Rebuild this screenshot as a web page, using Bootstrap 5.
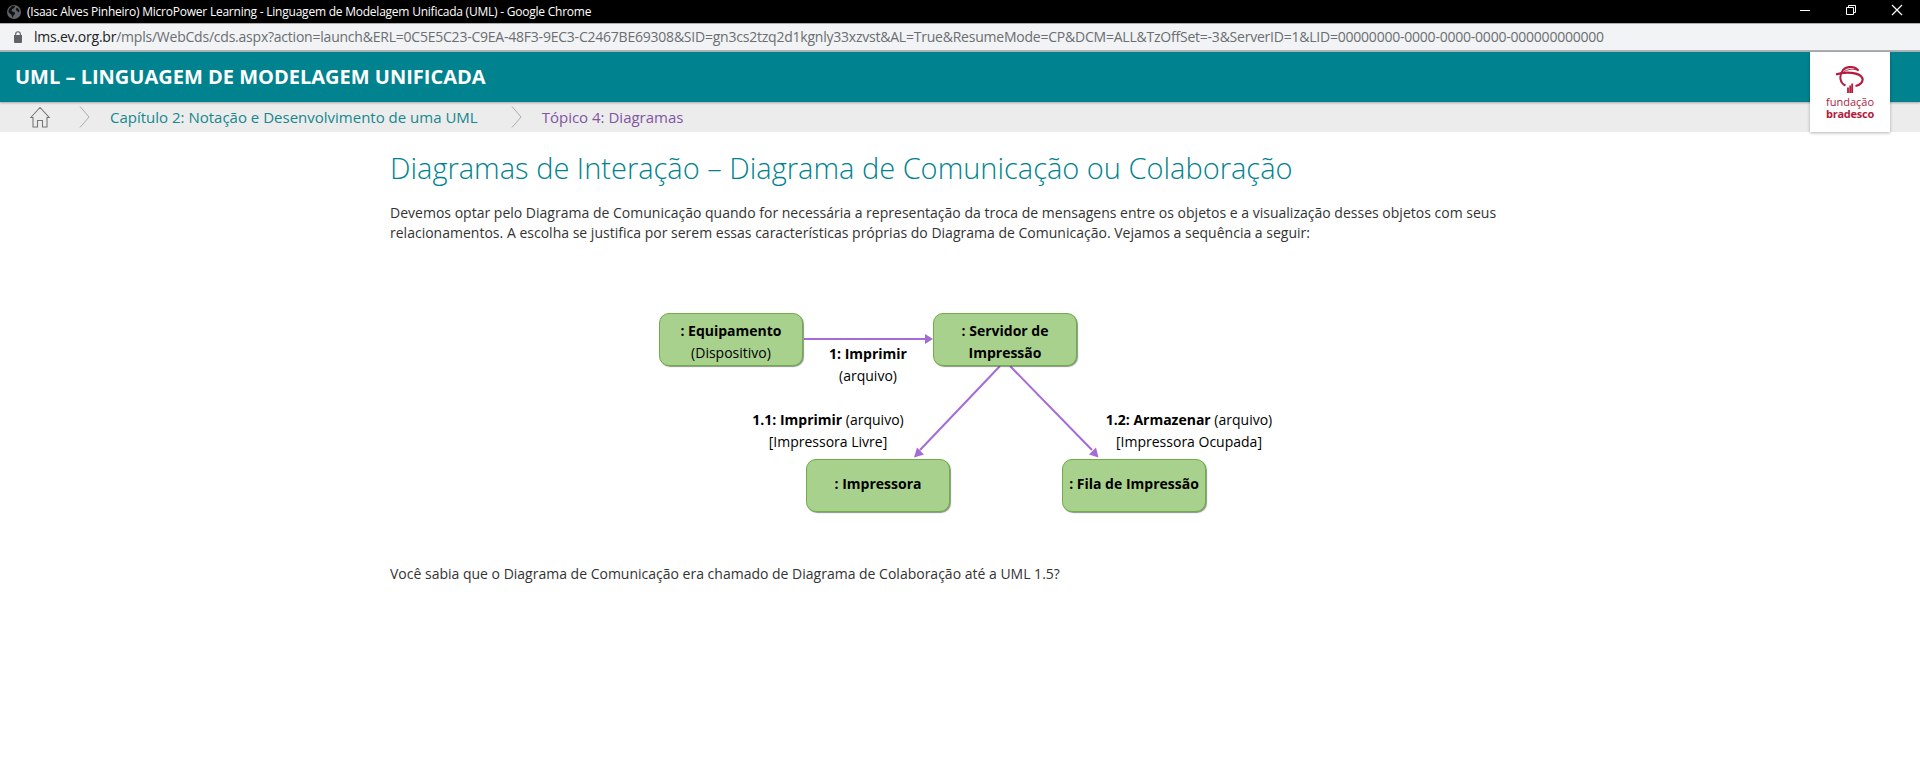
<!DOCTYPE html>
<html lang="pt-BR">
<head>
<meta charset="utf-8">
<meta name="viewport" content="width=device-width, initial-scale=1">
<title>MicroPower Learning - Linguagem de Modelagem Unificada (UML)</title>
<link href="https://cdn.jsdelivr.net/npm/bootstrap@5.3.0/dist/css/bootstrap.min.css" rel="stylesheet">
<style>
  body { font-family: "Open Sans", sans-serif; color: #333; overflow: hidden; }
  b { font-weight: 700; }
  svg { display: block; flex: none; }
  .window-bar { height: 23px; background: #000; font-size: 12px; letter-spacing: -.23px; padding-left: 7px; padding-right: 17px; }
  .window-title { margin-left: 6px; }
  .window-buttons { gap: 34px; padding-bottom: 3px; }
  .address-bar { height: 29px; background: #f1f3f4; border-top: 1px solid #adadad; border-bottom: 2px solid #b0b3b5; padding-left: 14px; font-size: 14px; letter-spacing: -.224px; color: #6b6e72; }
  .address-text { margin-left: 12px; padding-bottom: 2px; white-space: nowrap; }
  .address-text b { font-weight: 400; color: #202124; }
  .course-bar { height: 50px; background: #00838f; padding-left: 15px; position: relative; z-index: 1; box-shadow: 0 1px 2px rgba(0,0,0,.3); }
  .course-title { font-size: 20px; font-weight: 700; color: #fff; }
  .brand-card { position: absolute; top: 0; right: 30px; width: 80px; height: 80px; box-shadow: 0 1px 3px rgba(0,0,0,.3); color: #b31b3c; font-size: 11px; line-height: 12px; padding-top: 14px; }
  .brand-name { margin-top: 2px; }
  .brand-name b { letter-spacing: -.25px; }
  .crumbs { height: 30px; background: #ececec; font-size: 15px; line-height: 30px; padding-left: 30px; }
  .crumb-chapter { color: #13888f; margin-left: 20px; }
  .crumb-topic { color: #8055a3; margin-left: 20px; }
  .crumb-first { margin-left: 29px; }
  .crumb-next { margin-left: 33px; }
  .lesson { width: 1140px; margin-left: 390px; }
  .lesson-title { font-size: 29px; font-weight: 300; line-height: 36px; color: #00838f; margin: 18px 0 17px; }
  .lesson p { font-size: 14px; line-height: 20px; margin: 0; }
  .intro { letter-spacing: .009px; }
  .diagram { position: relative; width: 640px; height: 210px; margin: 65px 0 46px 264px; font-size: 14px; line-height: 22px; color: #000; text-align: center; }
  .object-node { position: absolute; width: 144px; height: 53px; background: #a9d18e; border: 1px solid #70ad47; border-radius: 10px; box-shadow: 1px 1px 1px rgba(60,80,60,.6); padding-top: 6px; font-weight: 700; white-space: nowrap; }
  .object-node span { font-weight: 400; }
  .single-line { padding-top: 13px; }
  .message { position: absolute; transform: translateX(-50%); white-space: nowrap; }
  .arrows { position: absolute; left: 0; top: 0; }
</style>
</head>
<body>
<header>
  <div class="window-bar d-flex align-items-center text-white">
    <svg width="14" height="14" viewBox="0 0 14 14"><circle cx="7" cy="7" r="7" fill="#606468"/><path d="M5 1 8 .7 7.4 3 5.4 4 4.5 6 7.8 7.4 8 9 6.5 10.5 5.7 13 4.5 10 1.3 7 2 4ZM10 2.5 12.4 5 12 7.5 9.7 6 8.8 4Z" fill="#111"/></svg>
    <span class="window-title me-auto">(Isaac Alves Pinheiro) MicroPower Learning - Linguagem de Modelagem Unificada (UML) - Google Chrome</span>
    <div class="window-buttons d-flex">
      <svg width="12" height="12" viewBox="0 0 12 12"><path d="M1 6.500H11" stroke="#fff"/></svg>
      <svg width="12" height="12" viewBox="0 0 12 12" fill="none" stroke="#fff"><path d="M1.500 3.500H8.500V10.500H1.500ZM3.500 3V1.500H10.500V8.500H9"/></svg>
      <svg width="12" height="12" viewBox="0 0 12 12"><path d="M1 1 11 11M11 1 1 11" stroke="#fff" stroke-width="1.2"/></svg>
    </div>
  </div>
  <div class="address-bar d-flex align-items-center">
    <svg width="8" height="12" viewBox="0 0 8 12"><path d="M0 4H8V11Q8 12 7 12H1Q0 12 0 11Z" fill="#5f6368"/><path d="M1.700 5V3A2.300 2.300 0 0 1 6.300 3V5" fill="none" stroke="#5f6368" stroke-width="1.1"/></svg>
    <span class="address-text"><b>lms.ev.org.br</b>/mpls/WebCds/cds.aspx?action=launch&amp;ERL=0C5E5C23-C9EA-48F3-9EC3-C2467BE69308&amp;SID=gn3cs2tzq2d1kgnly33xzvst&amp;AL=True&amp;ResumeMode=CP&amp;DCM=ALL&amp;TzOffSet=-3&amp;ServerID=1&amp;LID=00000000-0000-0000-0000-000000000000</span>
  </div>
  <div class="course-bar d-flex align-items-center">
    <span class="course-title">UML – LINGUAGEM DE MODELAGEM UNIFICADA</span>
    <div class="brand-card bg-white text-center">
      <svg class="mx-auto" width="28" height="28" viewBox="0 0 28 28" fill="none" stroke="#b31b3c"><path d="M22.500 4.700C19 0 11-.5 7 4 2.500 10 4 17 9.500 19.500" stroke-width="2"/><path d="M0 8.500C9 5.500 24 6 26.500 12.500 27.300 16 24 19 19.500 20" stroke-width="2.200"/><path d="M6 7.500C9 4 16 1.500 22.500 4.700" stroke-width=".9"/><path d="M12 27V21.500M14.200 27V19.500M16.200 27V17.500" stroke-width="1.800"/></svg>
      <div class="brand-name">fundação<br><b>bradesco</b></div>
    </div>
  </div>
  <nav class="crumbs d-flex align-items-center">
    <svg width="20" height="22" viewBox="0 0 20 22" fill="none" stroke="#777" stroke-width="1.100"><path d="M.8 11.500 10 1.500 19.200 11.500H17V21H12.500V14.500H7.500V21H3V11.500Z"/></svg>
    <svg class="crumb-first" width="11" height="22" viewBox="0 0 11 22" fill="none" stroke="#aaa"><path d="M1 .5 10 11 1 21.500"/></svg>
    <span class="crumb-chapter">Capítulo 2: Notação e Desenvolvimento de uma UML</span>
    <svg class="crumb-next" width="11" height="22" viewBox="0 0 11 22" fill="none" stroke="#aaa"><path d="M1 .5 10 11 1 21.500"/></svg>
    <span class="crumb-topic">Tópico 4: Diagramas</span>
  </nav>
</header>
<main class="lesson">
  <h1 class="lesson-title">Diagramas de Interação – Diagrama de Comunicação ou Colaboração</h1>
  <p class="intro">Devemos optar pelo Diagrama de Comunicação quando for necessária a representação da troca de mensagens entre os objetos e a visualização desses objetos com seus<br>relacionamentos. A escolha se justifica por serem essas características próprias do Diagrama de Comunicação. Vejamos a sequência a seguir:</p>
  <div class="diagram">
    <svg class="arrows" width="640" height="210" viewBox="654 307 640 210" fill="none" stroke="#a56bd6" stroke-width="2"><path d="M804 338H925M1000 365 920 449M1010 365 1092 449"/><g fill="#a56bd6" stroke="none"><path d="M925 333 933 338 925 343ZM914 456.500 917 446.500 924 453.500ZM1098.500 456.500 1089 453.500 1096 446.500Z"/></g></svg>
    <div class="object-node" style="left:5px;top:5px">: Equipamento<br><span>(Dispositivo)</span></div>
    <div class="object-node" style="left:279px;top:5px">: Servidor de<br>Impressão</div>
    <div class="object-node single-line" style="left:152px;top:151px">: Impressora</div>
    <div class="object-node single-line" style="left:408px;top:151px">: Fila de Impressão</div>
    <div class="message" style="left:214px;top:35px"><b>1: Imprimir</b><br>(arquivo)</div>
    <div class="message" style="left:174px;top:101px"><b>1.1: Imprimir</b> (arquivo)<br>[Impressora Livre]</div>
    <div class="message" style="left:535px;top:101px"><b>1.2: Armazenar</b> (arquivo)<br>[Impressora Ocupada]</div>
  </div>
  <p>Você sabia que o Diagrama de Comunicação era chamado de Diagrama de Colaboração até a UML 1.5?</p>
</main>
<script src="https://cdn.jsdelivr.net/npm/bootstrap@5.3.0/dist/js/bootstrap.bundle.min.js"></script>
</body>
</html>
